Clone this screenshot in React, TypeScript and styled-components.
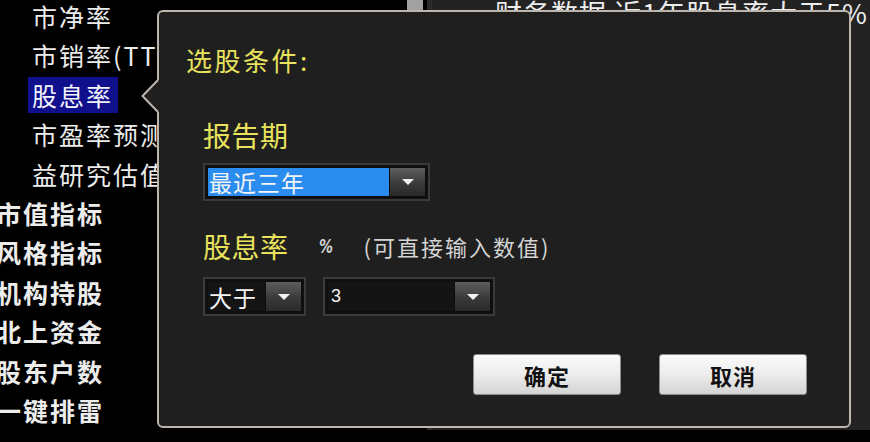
import React from 'react';
import styled, { createGlobalStyle } from 'styled-components';

const GlobalStyle = createGlobalStyle`
  html, body {
    margin: 0;
    padding: 0;
    background: #000;
  }
  body {
    font-family: "Noto Sans CJK SC", "Noto Sans", sans-serif;
  }
  * {
    box-sizing: border-box;
  }
`;

const treeItems = [
  { label: '市净率', sub: true },
  { label: '市销率(TTM)', sub: true },
  { label: '股息率', sub: true, active: true },
  { label: '市盈率预测', sub: true },
  { label: '益研究估值', sub: true },
  { label: '市值指标' },
  { label: '风格指标' },
  { label: '机构持股' },
  { label: '北上资金' },
  { label: '股东户数' },
  { label: '一键排雷' },
];

const App = () => {
  return (
    <>
      <GlobalStyle />
      <Page>
        <Main>
          <TreePane>
            {treeItems.map((item) => (
              <TreeRow key={item.label} $sub={!!item.sub}>
                <TreeLabel $sub={!!item.sub} $active={!!item.active}>
                  {item.label}
                </TreeLabel>
              </TreeRow>
            ))}
          </TreePane>
          <ScrollTrack>
            <ScrollThumb />
          </ScrollTrack>
          <ResultPane>
            <ResultText>财务数据 近1年股息率大于5%</ResultText>
          </ResultPane>
        </Main>
        <Footer />

        <Dialog>
          <Pointer width="20" height="36" viewBox="0 0 20 36">
            <polygon points="1.5,18 17,2 20,2 20,34 17,34" fill="#1f1f1f" />
            <polyline
              points="17,2 1.5,18 17,34"
              fill="none"
              stroke="#bdb6ad"
              strokeWidth="2"
            />
          </Pointer>
          <Title>选股条件:</Title>
          <Body>
            <FieldLabel $top={43}>报告期</FieldLabel>
            <ComboRow $top={11}>
              <Combo $width={227} $height={38}>
                <ComboField $highlight>最近三年</ComboField>
                <DropButton>
                  <Caret />
                </DropButton>
              </Combo>
            </ComboRow>

            <LabelRow>
              <FieldLabel $top={0}>股息率</FieldLabel>
              <Unit>%</Unit>
              <Hint>(可直接输入数值)</Hint>
            </LabelRow>
            <ComboRow $top={14}>
              <Combo $width={103} $height={39}>
                <ComboField>大于</ComboField>
                <DropButton>
                  <Caret />
                </DropButton>
              </Combo>
              <Combo $width={172} $height={39}>
                <ComboField $numeric>3</ComboField>
                <DropButton>
                  <Caret />
                </DropButton>
              </Combo>
            </ComboRow>
          </Body>
          <Actions>
            <ActionButton>确定</ActionButton>
            <ActionButton>取消</ActionButton>
          </Actions>
        </Dialog>
      </Page>
    </>
  );
};

const Page = styled.div`
  position: relative;
  width: 870px;
  height: 442px;
  overflow: hidden;
  display: flex;
  flex-direction: column;
  background: #000;
`;

const Main = styled.div`
  display: flex;
  height: 430px;
`;

const Footer = styled.div`
  flex: 1;
  background: #000;
`;

const TreePane = styled.div`
  width: 407px;
  margin-top: -4px;
  display: flex;
  flex-direction: column;
  background: #000;
`;

const TreeRow = styled.div<{ $sub: boolean }>`
  height: 39.7px;
  display: flex;
  align-items: center;
  padding-left: ${(p) => (p.$sub ? '28px' : '0')};
  margin-left: ${(p) => (p.$sub ? '0' : '-4px')};
`;

const TreeLabel = styled.span<{ $sub: boolean; $active: boolean }>`
  display: inline-block;
  height: 36px;
  line-height: 36px;
  padding: 0 5px 0 ${(p) => (p.$sub ? '4px' : '0')};
  font-size: 25px;
  letter-spacing: 2px;
  white-space: nowrap;
  font-weight: ${(p) => (p.$sub ? 400 : 700)};
  color: ${(p) => (p.$active ? '#f4f4ff' : '#ececec')};
  background: ${(p) => (p.$active ? '#10108c' : 'transparent')};
`;

const ScrollTrack = styled.div`
  width: 25px;
  display: flex;
  border-right: 5px solid #2c2c2c;
`;

const ScrollThumb = styled.div`
  width: 16px;
  height: 90px;
  background: #a2a2a2;
`;

const ResultPane = styled.div`
  flex: 1;
  background: #232323;
  padding-left: 63px;
`;

const ResultText = styled.div`
  margin-top: -2px;
  font-size: 27px;
  line-height: 30px;
  letter-spacing: 1px;
  color: #eeeeee;
  white-space: nowrap;
`;

const Dialog = styled.div`
  position: absolute;
  left: 157px;
  top: 10px;
  width: 694px;
  height: 418px;
  border: 2px solid #bdb6ad;
  border-radius: 6px;
  background: #1f1f1f;
  padding: 33px 42px 0 27px;
  display: flex;
  flex-direction: column;
`;

const Pointer = styled.svg`
  position: absolute;
  left: -18px;
  top: 66px;
`;

const Title = styled.div`
  font-size: 26px;
  line-height: 30px;
  color: #e8e25c;
  letter-spacing: 2.5px;
`;

const Body = styled.div`
  display: flex;
  flex-direction: column;
  padding-left: 17px;
`;

const FieldLabel = styled.div<{ $top: number }>`
  margin-top: ${(p) => p.$top}px;
  font-size: 28px;
  line-height: 34px;
  color: #e8e25c;
  letter-spacing: 0.5px;
`;

const LabelRow = styled.div`
  display: flex;
  align-items: center;
  margin-top: 28px;
`;

const Unit = styled.span`
  margin-left: 27px;
  font-family: "DejaVu Sans", sans-serif;
  font-style: italic;
  font-weight: 700;
  font-size: 20px;
  line-height: 20px;
  color: #d0d0d0;
  transform: scaleX(0.7);
`;

const Hint = styled.span`
  margin-left: 28px;
  font-size: 22px;
  color: #d4d4d4;
  letter-spacing: 2px;
`;

const ComboRow = styled.div<{ $top: number }>`
  display: flex;
  gap: 17px;
  margin-top: ${(p) => p.$top}px;
`;

const Combo = styled.div<{ $width: number; $height: number }>`
  width: ${(p) => p.$width}px;
  height: ${(p) => p.$height}px;
  display: flex;
  border: 2px solid #3a3a3a;
  outline: 1px solid #111;
  outline-offset: -3px;
  background: #0e0e0e;
  padding: 3px;
`;

const ComboField = styled.div<{ $highlight?: boolean; $numeric?: boolean }>`
  flex: 1;
  display: flex;
  align-items: center;
  padding-left: ${(p) => (p.$numeric ? '3px' : '1px')};
  background: ${(p) => (p.$highlight ? '#2b8cf0' : '#141414')};
  color: #f4f4f4;
  font-family: ${(p) =>
    p.$numeric ? '"Liberation Sans", Arial, sans-serif' : '"Noto Sans CJK SC", sans-serif'};
  font-size: ${(p) => (p.$numeric ? '18px' : '23px')};
  letter-spacing: 1px;
`;

const DropButton = styled.div`
  width: 35px;
  margin-left: 1px;
  display: flex;
  align-items: center;
  justify-content: center;
  background: linear-gradient(#5e5e5e, #3a3a3a 55%, #2a2a2a);
`;

const Caret = styled.span`
  width: 0;
  height: 0;
  border-left: 6px solid transparent;
  border-right: 6px solid transparent;
  border-top: 6px solid #f2f2f2;
`;

const Actions = styled.div`
  display: flex;
  justify-content: flex-end;
  gap: 38px;
  margin-top: 38px;
`;

const ActionButton = styled.div`
  width: 148px;
  height: 41px;
  display: flex;
  align-items: center;
  justify-content: center;
  border: 1px solid #8c8c8c;
  border-radius: 3px;
  background: linear-gradient(#fbfbfb, #ececec 50%, #d4d4d4);
  color: #111;
  font-size: 22px;
  font-weight: 700;
  letter-spacing: 1px;
`;

export default App;
